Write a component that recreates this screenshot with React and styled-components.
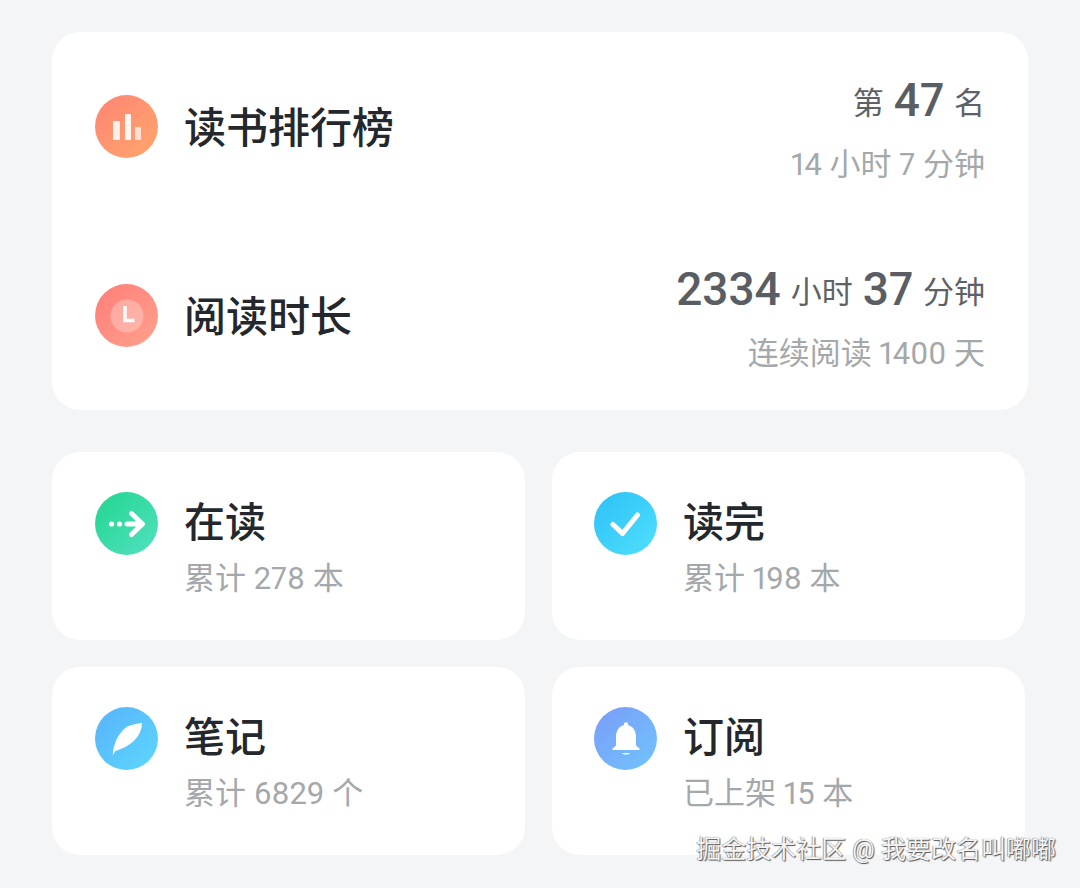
import React from "react";
import styled, { createGlobalStyle } from "styled-components";

const GlobalStyle = createGlobalStyle`
  html, body {
    margin: 0;
    padding: 0;
    background: #f4f5f7;
  }
  body {
    font-family: Roboto, "Noto Sans CJK SC", sans-serif;
    font-variant-numeric: proportional-nums;
  }
`;

const Page = styled.div`
  position: relative;
  width: 1080px;
  height: 888px;
  box-sizing: border-box;
  padding: 32px 52px 0;
  overflow: hidden;
  display: flex;
  flex-direction: column;
  gap: 42px;
`;

const Card = styled.div`
  background: #fff;
  border-radius: 28px;
`;

const RankCard = styled(Card)`
  width: 976px;
  height: 378px;
  display: flex;
  flex-direction: column;
`;

const RankRow = styled.div`
  flex: 1;
  display: flex;
  align-items: center;
  gap: 26px;
  padding: 0 43px;
`;

const Badge = styled.div`
  width: 63px;
  height: 63px;
  flex: none;
  border-radius: 50%;
  background: linear-gradient(135deg, ${(p) => p.$from}, ${(p) => p.$to});
  display: flex;
  align-items: center;
  justify-content: center;
`;

const RowTitle = styled.div`
  flex: 1;
  padding-top: 4px;
  font-size: 42px;
  font-weight: 500;
  line-height: 56px;
  color: #24282c;
`;

const Stats = styled.div`
  display: flex;
  flex-direction: column;
  align-items: flex-end;
  gap: 11px;
  padding-top: 10px;
`;

const StatMain = styled.div`
  height: 56px;
  display: flex;
  align-items: center;
  gap: 10px;
  font-size: 31px;
  line-height: 56px;
  color: #5e6266;
`;

const StatNum = styled.span`
  margin-bottom: 8px;
  font-size: 46px;
  font-weight: 500;
  color: #5a5e63;
`;

const StatSub = styled.div`
  font-size: 31px;
  line-height: 44px;
  color: #a4a8ab;
`;

const Grid = styled.div`
  display: grid;
  grid-template-columns: 473px 473px;
  grid-auto-rows: 188px;
  column-gap: 27px;
  row-gap: 27px;
`;

const ShelfCard = styled(Card)`
  display: flex;
  gap: 26px;
  padding: 40px 43px;
  &:nth-child(even) {
    padding-left: 42px;
  }
`;

const ShelfText = styled.div`
  display: flex;
  flex-direction: column;
  gap: 3px;
  padding-top: 1px;
`;

const ShelfTitle = styled.div`
  font-size: 41px;
  font-weight: 500;
  line-height: 60px;
  color: #24282c;
`;

const ShelfSub = styled.div`
  font-size: 31px;
  line-height: 46px;
  color: #a4a8ab;
`;

const Watermark = styled.div`
  position: absolute;
  right: 24px;
  bottom: 22px;
  font-size: 25px;
  line-height: 32px;
  color: #f4f4f4;
  text-shadow: 1px 1px 1px #555, -0.5px -0.5px 1px #777;
`;

const BarsIcon = () => (
  <svg width="28" height="26" viewBox="0 0 28 26" fill="#fff">
    <rect x="0" y="7" width="7" height="19" rx="1" opacity="0.85" />
    <rect x="12" y="0" width="6" height="26" rx="1" opacity="0.9" />
    <rect x="22" y="13" width="6" height="13" rx="1" opacity="0.7" />
  </svg>
);

const ClockIcon = () => (
  <svg width="36" height="36" viewBox="0 0 36 36">
    <circle cx="18" cy="18" r="16.5" fill="#fff" fillOpacity="0.28" />
    <path d="M16 8v14.5h9.5" fill="none" stroke="#fff" strokeWidth="3.4" />
  </svg>
);

const ArrowIcon = () => (
  <svg width="40" height="32" viewBox="0 0 40 32" fill="none">
    <circle cx="4.5" cy="16" r="2.6" fill="#fff" />
    <circle cx="12.5" cy="16" r="2.6" fill="#fff" />
    <path d="M20 16h15M24.5 5.5L35.5 16 24.5 26.5" stroke="#fff" strokeWidth="5" strokeLinecap="round" strokeLinejoin="round" />
  </svg>
);

const CheckIcon = () => (
  <svg width="32" height="26" viewBox="0 0 32 26" fill="none">
    <path d="M3 13.5l9.5 9L27.5 4" stroke="#fff" strokeWidth="5" strokeLinecap="round" strokeLinejoin="round" />
  </svg>
);

const FeatherIcon = () => (
  <svg width="32" height="34" viewBox="-1 0 32 34" fill="#fff">
    <path d="M0.7 33.3C1 28 2 24 3.3 20.7 4.5 17 6 14.5 7.7 12.3 10 8.5 13 6 15 4.7 20 2.5 25 1.5 30 0.7 30 5 29 8 27.7 10.7 26 14 24 17 21.7 19 18 22 15 24.5 11.7 25.7 9 27 6 27.8 3.3 29 2.5 30.5 1.5 32 0.7 33.3Z" />
  </svg>
);

const BellIcon = () => (
  <svg width="30" height="34" viewBox="0 0 30 34" fill="#fff">
    <circle cx="15" cy="2.5" r="2.2" />
    <path d="M15 3C8.5 3 5 8 5 15v8.500L1.5 26.5V28h27v-1.500L25 23.5V15C25 8 21.5 3 15 3Z" />
    <path d="M11 31h8c-1 2-7 2-8 0Z" opacity="0.9" />
  </svg>
);

const shelves = [
  { title: "在读", sub: "累计 278 本", from: "#22d68f", to: "#52e0c0", icon: <ArrowIcon /> },
  { title: "读完", sub: "累计 198 本", from: "#2cc0f8", to: "#50e0fb", icon: <CheckIcon /> },
  { title: "笔记", sub: "累计 6829 个", from: "#58b2fb", to: "#5cd8fd", icon: <FeatherIcon /> },
  { title: "订阅", sub: "已上架 15 本", from: "#7a9cf9", to: "#70c4fc", icon: <BellIcon /> },
];

export default function App() {
  return (
    <Page>
      <GlobalStyle />
      <RankCard>
        <RankRow>
          <Badge $from="#ff8474" $to="#ffa76c">
            <BarsIcon />
          </Badge>
          <RowTitle>读书排行榜</RowTitle>
          <Stats>
            <StatMain>
              第 <StatNum>47</StatNum> 名
            </StatMain>
            <StatSub>14 小时 7 分钟</StatSub>
          </Stats>
        </RankRow>
        <RankRow>
          <Badge $from="#ff7d78" $to="#ffa28e">
            <ClockIcon />
          </Badge>
          <RowTitle>阅读时长</RowTitle>
          <Stats>
            <StatMain>
              <StatNum>2334</StatNum> 小时 <StatNum>37</StatNum> 分钟
            </StatMain>
            <StatSub>连续阅读 1400 天</StatSub>
          </Stats>
        </RankRow>
      </RankCard>
      <Grid>
        {shelves.map((s) => (
          <ShelfCard key={s.title}>
            <Badge $from={s.from} $to={s.to}>
              {s.icon}
            </Badge>
            <ShelfText>
              <ShelfTitle>{s.title}</ShelfTitle>
              <ShelfSub>{s.sub}</ShelfSub>
            </ShelfText>
          </ShelfCard>
        ))}
      </Grid>
      <Watermark>掘金技术社区 @ 我要改名叫嘟嘟</Watermark>
    </Page>
  );
}
